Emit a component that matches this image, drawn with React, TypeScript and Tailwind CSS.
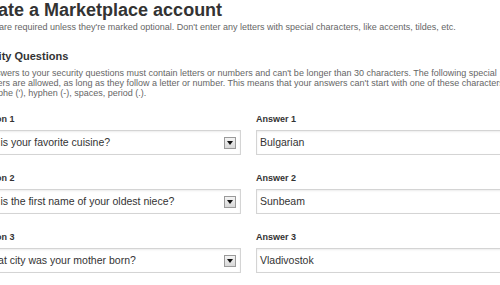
import React from 'react';

const questions = [
  { q: 'What is your favorite cuisine?', a: 'Bulgarian' },
  { q: 'What is the first name of your oldest niece?', a: 'Sunbeam' },
  { q: 'In what city was your mother born?', a: 'Vladivostok' },
];

const ArrowButton: React.FC = () => (
  <span className="flex h-[12px] w-[12px] items-center justify-center border border-[#9a9a9a] bg-gradient-to-b from-[#f4f4f4] to-[#d8d8d8]">
    <svg width="6" height="4" viewBox="0 0 6 4">
      <path d="M0 0h6L3 4z" fill="#111" />
    </svg>
  </span>
);

const App: React.FC = () => {
  return (
    <div className="h-[285px] w-[500px] overflow-hidden bg-white font-[family-name:Liberation_Sans,Arial,sans-serif]">
      <div className="ml-[-32px] w-[561px]">
        <h1 className="text-[18px] font-bold leading-[20px] text-[#333]">Create a Marketplace account</h1>
        <p className="-ml-[5px] mt-[1px] text-[9px] leading-[12px] text-[#666]">
          All fields are required unless they're marked optional. Don't enter any letters with special characters, like
          accents, tildes, etc.
        </p>

        <h2 className="mt-[16px] text-[11px] font-bold leading-[14px] text-[#333]">Security Questions</h2>
        <p className="mt-[5px] text-[9px] leading-[10px] text-[#666]">
          The answers to your security questions must contain letters or numbers and can't be longer than 30 characters.
          The following special characters are allowed, as long as they follow a letter or number. This means that your
          answers can't start with one of these characters, apostrophe ('), hyphen (-), spaces, period (.).
        </p>

        <div className="mt-[15px] grid grid-cols-2 gap-x-[15px] gap-y-[17px]">
          {questions.map((item, i) => (
            <React.Fragment key={i}>
              <div>
                <label className="block text-[9px] font-bold leading-[12px] text-[#333]">Question {i + 1}</label>
                <div className="mt-[5px] flex h-[25px] items-center justify-between border border-[#d4d4d4] bg-white pl-[4px] pr-[4px] shadow-[inset_0_1px_2px_rgba(0,0,0,0.08)]">
                  <span className="text-[10.5px] text-[#333]">{item.q}</span>
                  <ArrowButton />
                </div>
              </div>
              <div>
                <label className="block text-[9px] font-bold leading-[12px] text-[#333]">Answer {i + 1}</label>
                <div className="mt-[5px] flex h-[25px] items-center border border-[#d4d4d4] bg-white pl-[3px] shadow-[inset_0_1px_2px_rgba(0,0,0,0.08)]">
                  <span className="text-[10.5px] text-[#333]">{item.a}</span>
                </div>
              </div>
            </React.Fragment>
          ))}
        </div>
      </div>
    </div>
  );
};

export default App;
